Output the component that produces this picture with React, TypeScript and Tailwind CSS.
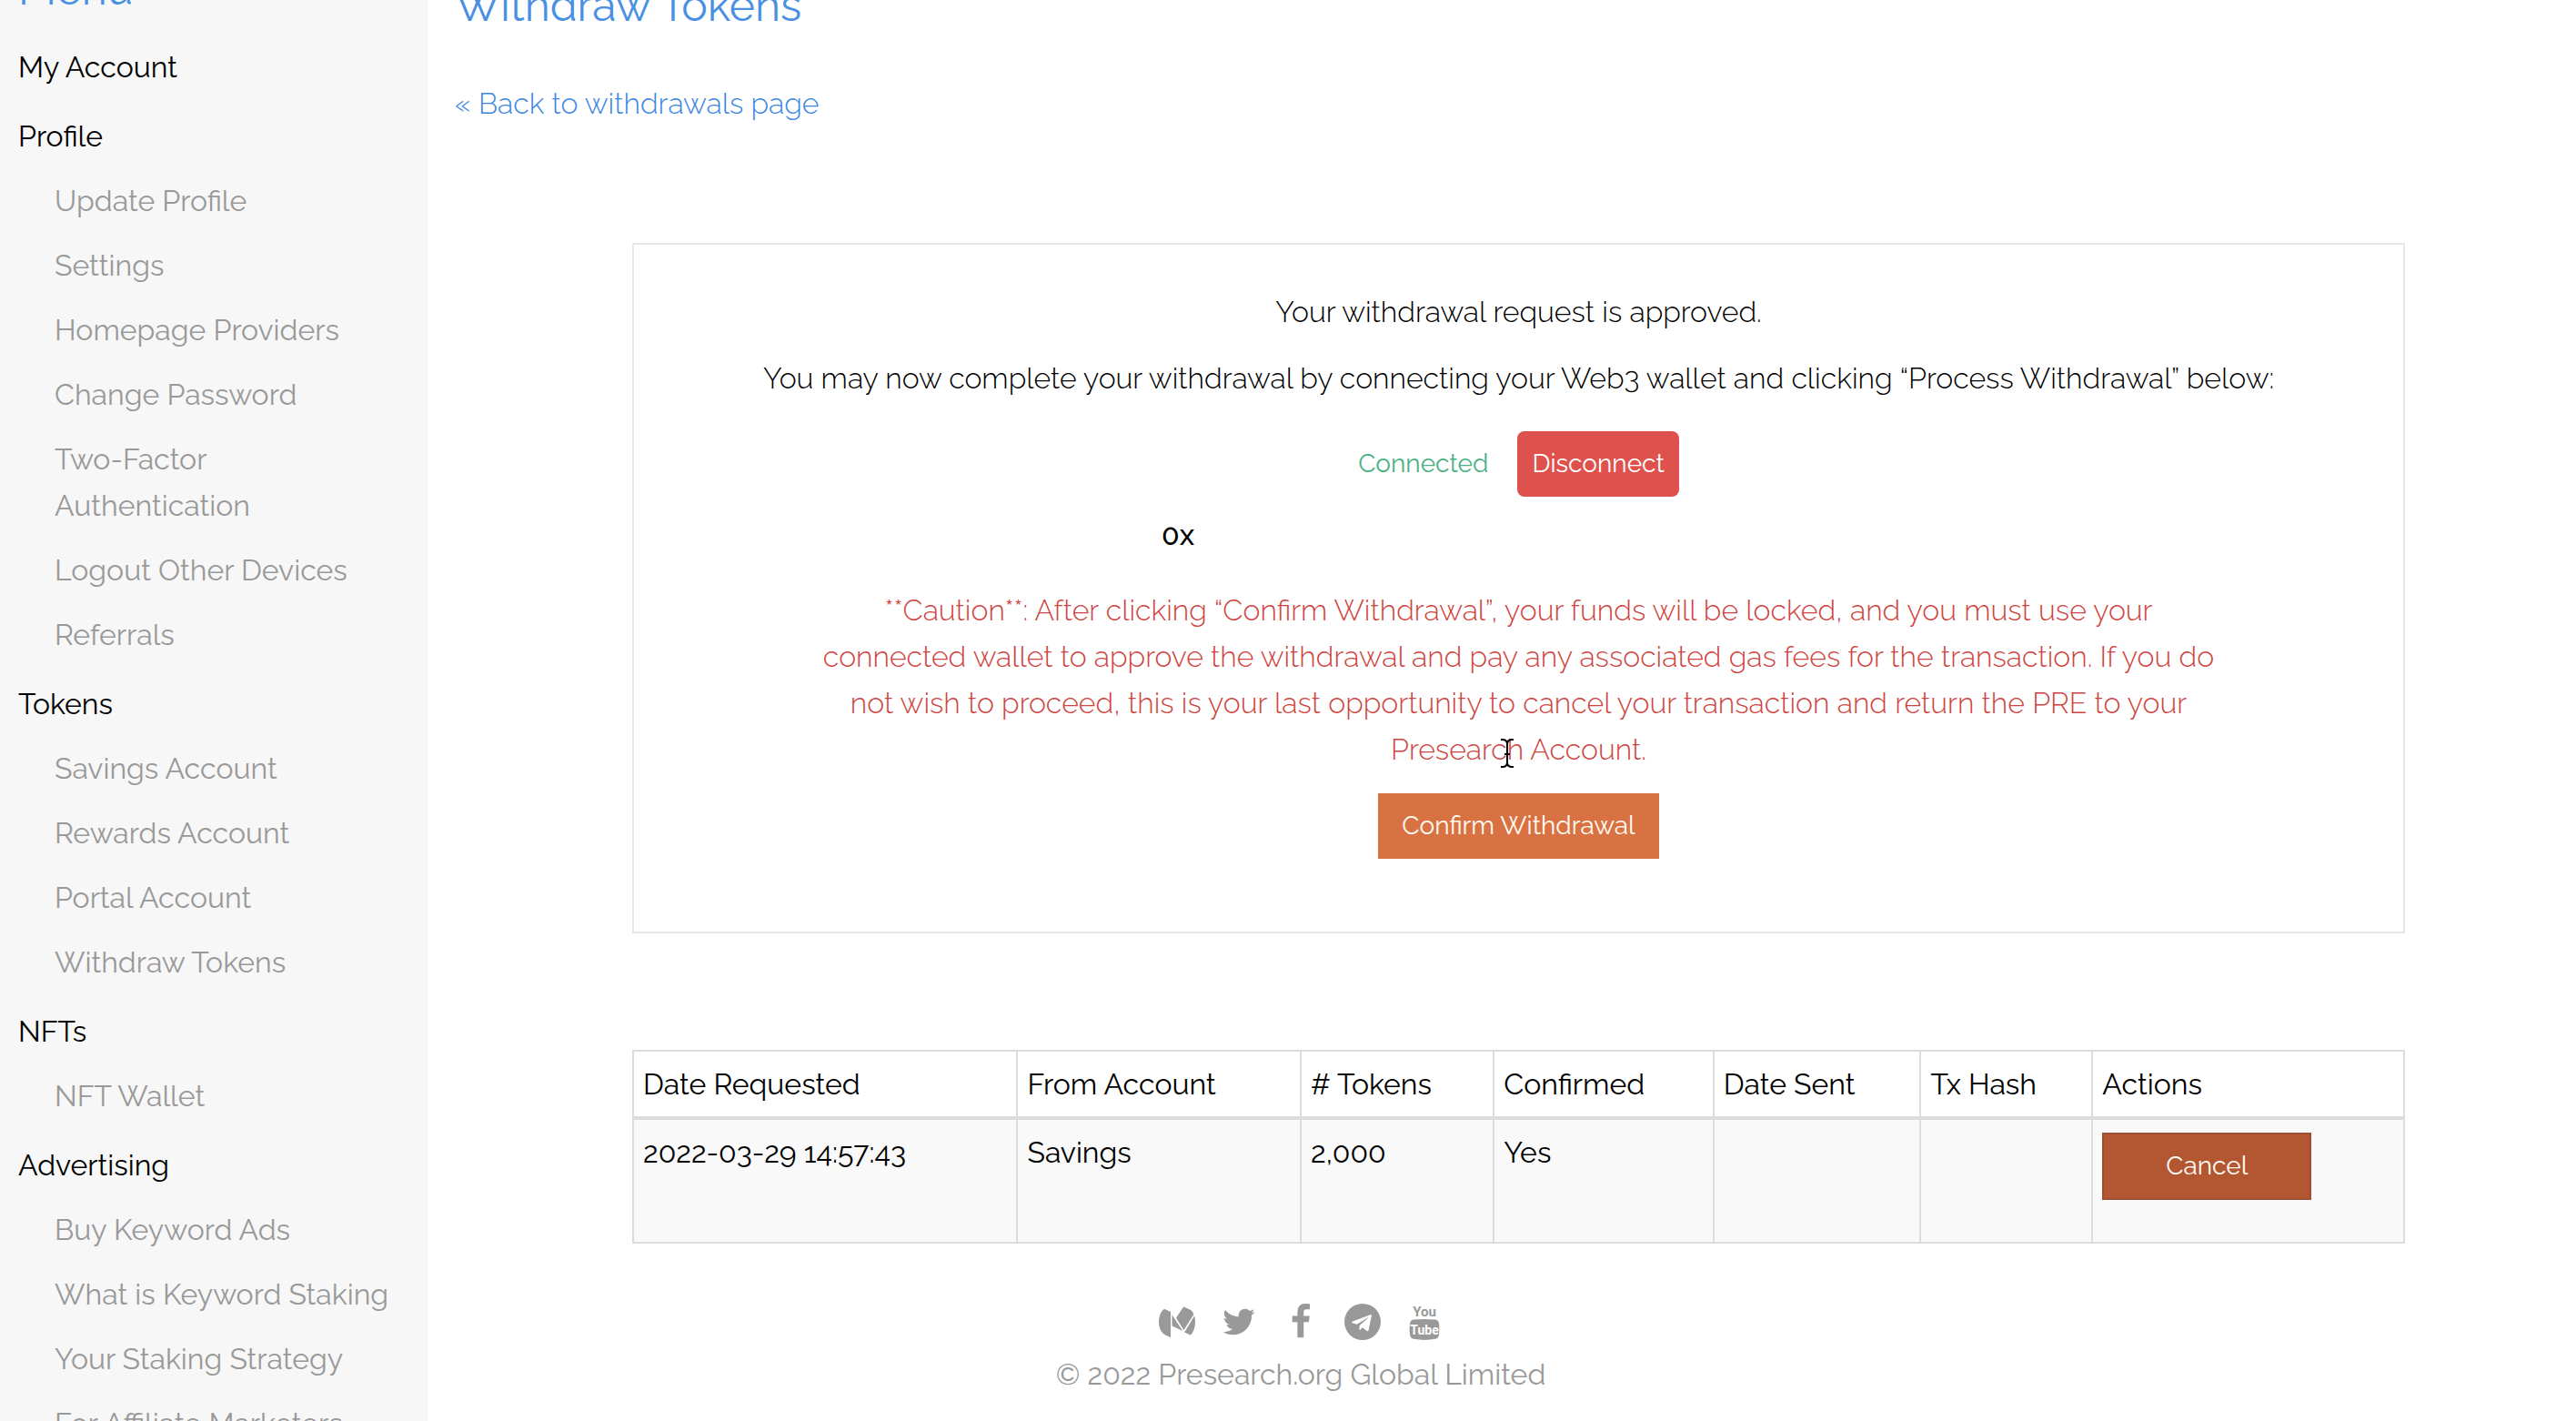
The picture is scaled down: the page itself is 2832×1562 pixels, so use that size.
import type { ReactNode } from 'react'

type Section = { title: string; items: string[] }

const sections: Section[] = [
  { title: 'My Account', items: [] },
  {
    title: 'Profile',
    items: [
      'Update Profile',
      'Settings',
      'Homepage Providers',
      'Change Password',
      'Two-Factor Authentication',
      'Logout Other Devices',
      'Referrals',
    ],
  },
  { title: 'Tokens', items: ['Savings Account', 'Rewards Account', 'Portal Account', 'Withdraw Tokens'] },
  { title: 'NFTs', items: ['NFT Wallet'] },
  {
    title: 'Advertising',
    items: ['Buy Keyword Ads', 'What is Keyword Staking', 'Your Staking Strategy', 'For Affiliate Marketers'],
  },
]

const columns = [
  { label: 'Date Requested', width: 'w-[21.7%]' },
  { label: 'From Account', width: 'w-[16%]' },
  { label: '# Tokens', width: 'w-[10.9%]' },
  { label: 'Confirmed', width: 'w-[12.4%]' },
  { label: 'Date Sent', width: 'w-[11.7%]' },
  { label: 'Tx Hash', width: 'w-[9.7%]' },
  { label: 'Actions', width: 'w-[17.6%]' },
]

function Sidebar() {
  return (
    <nav aria-label="Account menu" className="w-[470px] shrink-0 bg-[#f7f7f7] pr-10 pl-5">
      <h2 className="-mt-[42px] mb-[5px] text-5xl leading-[60px] text-[#4a90e2]">Menu</h2>
      {sections.map((section) => (
        <section key={section.title}>
          <a href="#" className="block pt-[25px] text-black">
            {section.title}
          </a>
          <ul className="pl-10 text-[#999999]">
            {section.items.map((item) => (
              <li key={item} className="pt-5">
                <a href="#" className="block">
                  {item}
                </a>
              </li>
            ))}
          </ul>
        </section>
      ))}
    </nav>
  )
}

function TextCursor() {
  return (
    <svg
      viewBox="0 0 14 32"
      className="absolute bottom-[5px] left-1/2 -ml-5 h-8 w-3.5"
      fill="none"
      stroke="#000"
      strokeWidth="2"
      aria-hidden="true"
    >
      <path d="M0 1h2.500Q7 1.500 7 6v20Q7 30.500 2.500 31H0M14 1h-2.500Q7 1.500 7 6M14 31h-2.500Q7 30.500 7 26M4 17h6" />
    </svg>
  )
}

function ApprovalCard() {
  return (
    <section className="flex flex-col items-center border-2 border-[#e5e7e9] px-8 pt-12 pb-20 text-center font-light text-black">
      <p>Your withdrawal request is approved.</p>
      <p className="mt-[22px]">
        You may now complete your withdrawal by connecting your Web3 wallet and clicking “Process Withdrawal” below:
      </p>
      <div className="mt-[33px] flex items-center gap-8 text-[28px] leading-10 font-normal">
        <span className="text-[#4cb283]">Connected</span>
        <button type="button" className="rounded-lg bg-[#df514c] px-4 py-4 text-white">
          Disconnect
        </button>
      </div>
      <p className="mt-4 w-[785px] text-left font-medium">0x</p>
      <p className="relative mt-8 max-w-[1540px] text-[#cf4441]">
        **Caution**: After clicking “Confirm Withdrawal”, your funds will be locked, and you must use your connected
        wallet to approve the withdrawal and pay any associated gas fees for the transaction. If you do not wish to
        proceed, this is your last opportunity to cancel your transaction and return the PRE to your Presearch Account.
        <TextCursor />
      </p>
      <button
        type="button"
        className="mt-[23px] bg-[#d97242] px-[26px] py-4 text-[28px] leading-10 font-normal text-[#fffaf2]"
      >
        Confirm Withdrawal
      </button>
    </section>
  )
}

function WithdrawalTable() {
  const cell = 'border-2 border-[#dcdcdc] px-2.5 py-2.5 text-left align-top font-normal'
  return (
    <table className="mt-32 w-full table-fixed border-collapse text-black">
      <colgroup>
        {columns.map((column) => (
          <col key={column.label} className={column.width} />
        ))}
      </colgroup>
      <thead>
        <tr className="border-b-4 border-[#dcdcdc]">
          {columns.map((column) => (
            <th key={column.label} scope="col" className="border-x-2 border-t-2 border-[#dcdcdc] px-2.5 py-2.5 text-left font-normal">
              {column.label}
            </th>
          ))}
        </tr>
      </thead>
      <tbody>
        <tr className="bg-[#f9f9f9]">
          <td className={cell}>2022-03-29 14:57:43</td>
          <td className={cell}>Savings</td>
          <td className={cell}>2,000</td>
          <td className={cell}>Yes</td>
          <td className={cell} />
          <td className={cell} />
          <td className="border-2 border-[#dcdcdc] px-2.5 pt-3.5 pb-[46px] text-left align-top">
            <button
              type="button"
              className="block h-[74px] w-[230px] border-2 border-[#9f4f31] bg-[#b35632] text-[28px] leading-10 font-normal text-[#fffaf2]"
            >
              Cancel
            </button>
          </td>
        </tr>
      </tbody>
    </table>
  )
}

function SocialLink({ label, children }: { label: string; children: ReactNode }) {
  return (
    <a href="#" aria-label={label} className="flex size-10 items-center justify-center">
      {children}
    </a>
  )
}

function Footer() {
  return (
    <footer className="mt-[66px] mr-[472px] flex flex-col items-center text-[#999999]">
      <div className="flex gap-7">
        <SocialLink label="Medium">
          <svg viewBox="0 0 40 34" className="h-[34px] w-10" fill="currentColor" aria-hidden="true">
            <path d="M6.500 3L13 6v28l-6-2.500C3 29 0 24 0 17.500S2.500 5.500 5 3.500Q5.700 2.800 6.500 3z" />
            <path d="M14.500 9.300L26.300 27 14.500 21.500z" />
            <path d="M27.200.2L35.500 4.200Q38 6.500 38.300 9L27.400 26 19 12.700z" />
            <path d="M39 10.400Q40 13.500 40 17.500C40 23 38 28 35.500 31Q34.800 31.700 34 31.300L28.200 28.500z" />
          </svg>
        </SocialLink>
        <SocialLink label="Twitter">
          <svg viewBox="0 0 1792 1792" className="size-10" fill="currentColor" aria-hidden="true">
            <path d="M1684 408q-67 98-162 167 1 14 1 42 0 130-38 259.5t-115.5 248.5-184.5 210.5-258 146-323 54.5q-271 0-496-145 35 4 78 4 225 0 401-138-105-2-188-64.5t-114-159.5q33 5 61 5 43 0 85-11-112-23-185.5-111.5t-73.5-205.5v-4q68 38 146 41-66-44-105-115t-39-154q0-88 44-163 121 149 294.5 238.5t371.5 99.5q-8-38-8-74 0-134 94.5-228.5t228.5-94.5q140 0 236 102 109-21 205-78-37 115-142 178 93-10 186-50z" />
          </svg>
        </SocialLink>
        <SocialLink label="Facebook">
          <svg viewBox="0 0 1792 1792" className="size-10" fill="currentColor" aria-hidden="true">
            <path d="M1343 12v264h-157q-86 0-116 36t-30 108v189h293l-39 296h-254v759h-306v-759h-255v-296h255v-218q0-186 104-288.5t277-102.5q147 0 228 12z" />
          </svg>
        </SocialLink>
        <SocialLink label="Telegram">
          <svg viewBox="0 0 1792 1792" className="size-10" fill="currentColor" aria-hidden="true">
            <path d="M1189 1307l147-693q9-44-10.5-63t-51.5-7l-864 333q-29 11-39.5 25t-2.5 26.5 32 19.5l221 69 513-323q21-14 32-6 7 5-4 15l-415 375-16 228q23 0 45-22l108-104 224 165q64 36 81-38zm603-411q0 182-71 348t-191 286-286 191-348 71-348-71-286-191-191-286-71-348 71-348 191-286 286-191 348-71 348 71 286 191 191 286 71 348z" />
          </svg>
        </SocialLink>
        <SocialLink label="YouTube">
          <svg viewBox="0 0 34 40" className="h-10 w-[34px]" fill="currentColor" aria-hidden="true">
            <path d="M5 17.500Q17 16.600 29 17.500Q32.500 18 33 22Q33.800 28.500 33 34Q32.500 38 29 38.800Q17 41 5 38.800Q1.500 38 1 34Q.2 28.500 1 22Q1.500 18 5 17.500z" />
            <text x="17" y="14" textAnchor="middle" className="font-[Roboto,sans-serif] text-[15px] font-bold">
              You
            </text>
            <text x="17" y="34" textAnchor="middle" fill="#fff" className="font-[Roboto,sans-serif] text-[14px] font-bold">
              Tube
            </text>
          </svg>
        </SocialLink>
      </div>
      <p className="mt-3">© 2022 Presearch.org Global Limited</p>
    </footer>
  )
}

export default function App() {
  return (
    <div className="flex h-screen overflow-hidden bg-white font-[Raleway,Lato,sans-serif] text-[32px] leading-[51px]">
      <Sidebar />
      <div className="min-w-0 flex-1 pl-[30px]">
        <h1 className="-mt-6 text-5xl leading-[60px] text-[#4a90e2]">Withdraw Tokens</h1>
        <a href="#" className="mt-[52px] block font-light text-[#3d86df]">
          « Back to withdrawals page
        </a>
        <main className="mt-32 mr-[188px] ml-[195px]">
          <ApprovalCard />
          <WithdrawalTable />
        </main>
        <Footer />
      </div>
    </div>
  )
}
